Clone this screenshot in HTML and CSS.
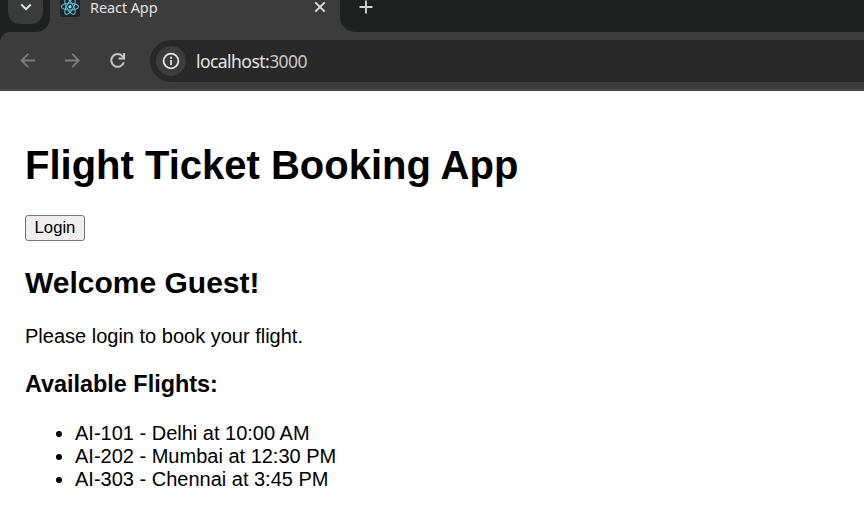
FILE: index.html
```html
<!DOCTYPE html>
<html lang="en">
<head>
<meta charset="utf-8">
<title>React App</title>
<link rel="stylesheet" href="styles.css">
</head>
<body>
<header class="browser">
  <div class="tabstrip">
    <div class="strip-left">
      <div class="tab-search">
        <svg width="35" height="24" viewBox="0 0 35 24" fill="none" stroke="#e3e3e3" stroke-width="2"><path d="M13.3 4.5l4.7 4.7 4.7-4.7"/></svg>
      </div>
    </div>
    <div class="tab">
      <svg class="favicon" width="20" height="17" viewBox="0 0 20 17">
        <path fill="#202323" d="M0 0h20v15a2 2 0 0 1-2 2H2a2 2 0 0 1-2-2z"/>
        <g fill="none" stroke="#58bcd8" stroke-width="1.1">
          <ellipse cx="10" cy="6.7" rx="8.6" ry="3.4"/>
          <ellipse cx="10" cy="6.7" rx="8.6" ry="3.4" transform="rotate(60 10 6.7)"/>
          <ellipse cx="10" cy="6.7" rx="8.6" ry="3.4" transform="rotate(120 10 6.7)"/>
        </g>
        <circle cx="10" cy="6.7" r="1.7" fill="#61dafb"/>
      </svg>
      <span class="tab-title">React App</span>
      <svg class="close" width="12" height="14" viewBox="0 0 12 14" stroke="#e3e3e3" stroke-width="1.8"><path d="M1.3 2.3l9.4 9.4M10.7 2.3l-9.4 9.4"/></svg>
    </div>
    <div class="strip-right">
      <svg width="14" height="14" viewBox="0 0 14 14" stroke="#d2d3d3" stroke-width="1.9"><path d="M7 .5v13M.5 7h13"/></svg>
    </div>
  </div>
  <div class="toolbar">
    <svg class="nav" width="16" height="16" viewBox="0 0 16 16" fill="none" stroke="#7c7c7c" stroke-width="1.8"><path d="M15 7.5H2M8.2 .9L1.6 7.5l6.6 6.6"/></svg>
    <svg class="nav" width="16" height="16" viewBox="0 0 16 16" fill="none" stroke="#7c7c7c" stroke-width="1.8"><path d="M0 7.5h13.4M7.2 .9l6.6 6.6-6.6 6.6"/></svg>
    <svg class="nav" width="16" height="16" viewBox="0 0 16 16" fill="none" stroke="#c7c7c7" stroke-width="2"><path d="M13.8 9.3A6.4 6.4 0 1 1 12.4 3.1L14 4.8M14.1 0v5.5H8.6"/></svg>
    <div class="address">
      <div class="site-info">
        <svg width="18" height="18" viewBox="0 0 18 18" fill="none" stroke="#e3e3e3" stroke-width="1.8"><circle cx="9" cy="9" r="7.4"/><path d="M9 8v5M9 4.8v2"/></svg>
      </div>
      <span class="url">localhost:<span class="port">3000</span></span>
    </div>
  </div>
</header>
<main class="app">
  <h1>Flight Ticket Booking App</h1>
  <button type="button">Login</button>
  <h2>Welcome Guest!</h2>
  <p>Please login to book your flight.</p>
  <h3>Available Flights:</h3>
  <ul>
    <li>AI-101 - Delhi at 10:00 AM</li>
    <li>AI-202 - Mumbai at 12:30 PM</li>
    <li>AI-303 - Chennai at 3:45 PM</li>
  </ul>
</main>
</body>
</html>
```
FILE: styles.css
```css
* {
  box-sizing: border-box;
}

body {
  margin: 0;
  height: 519px;
  overflow: hidden;
  background: #fff;
  color: #000;
  font: 20px/23px "Liberation Sans", Arial, sans-serif;
}

.browser {
  background: #1f2120;
  font-family: "Noto Sans", "Segoe UI", sans-serif;
}

.tabstrip {
  display: flex;
  height: 32px;
  background: #3c3c3c;
}

.strip-left {
  width: 50px;
  padding-left: 8px;
  background: #1f2120;
  border-bottom-right-radius: 14px;
}

.tab-search {
  width: 35px;
  height: 24px;
  background: #3a3b3b;
  border-radius: 0 0 12px 12px;
}

.tab-search svg,
.favicon,
.close,
.strip-right svg {
  display: block;
}

.tab {
  display: flex;
  width: 290px;
  padding-left: 10px;
}

.tab-title {
  width: 234px;
  padding-left: 10px;
  color: #e3e3e3;
  font-size: 14.5px;
  line-height: 14px;
  letter-spacing: -0.1px;
}

.strip-right {
  flex: 1;
  padding-left: 19px;
  background: #1f2120;
  border-bottom-left-radius: 15px;
}

.toolbar {
  display: flex;
  align-items: center;
  height: 59px;
  padding: 1px 0 0 20px;
  background: #3c3c3c;
  border-bottom: 2px solid #484647;
  border-top-left-radius: 10px;
}

.nav {
  flex: none;
  margin-right: 29px;
}

.nav + .nav + .nav {
  margin-right: 24px;
}

.address {
  display: flex;
  flex: 1;
  align-items: center;
  height: 42px;
  padding-left: 6px;
  background: #282828;
  border-radius: 21px 0 0 21px;
}

.site-info {
  display: flex;
  align-items: center;
  justify-content: center;
  width: 30px;
  height: 30px;
  border-radius: 50%;
  background: #3c3c3c;
}

.url {
  margin-left: 10px;
  color: #e3e3e3;
  font-size: 17.5px;
  letter-spacing: -0.55px;
}

.port {
  color: #c7c7c7;
}

.app {
  display: flow-root;
  padding: 25px;
}

h1 {
  margin: 26px 0;
  font-size: 40px;
  line-height: 47px;
}

button {
  display: block;
  width: 60px;
  height: 26px;
  padding: 0;
  border: 1px solid #767676;
  border-radius: 3px;
  background: #efefef;
  color: #000;
  font: 16.67px/22px "Liberation Sans", Arial, sans-serif;
}

h2 {
  margin: 25px 0;
  font-size: 30px;
  line-height: 34px;
}

p {
  margin: 20px 0;
}

h3 {
  margin: 23px 0 24px;
  font-size: 23.4px;
  line-height: 27px;
}

ul {
  margin: 20px 0;
  padding-left: 50px;
}
```
